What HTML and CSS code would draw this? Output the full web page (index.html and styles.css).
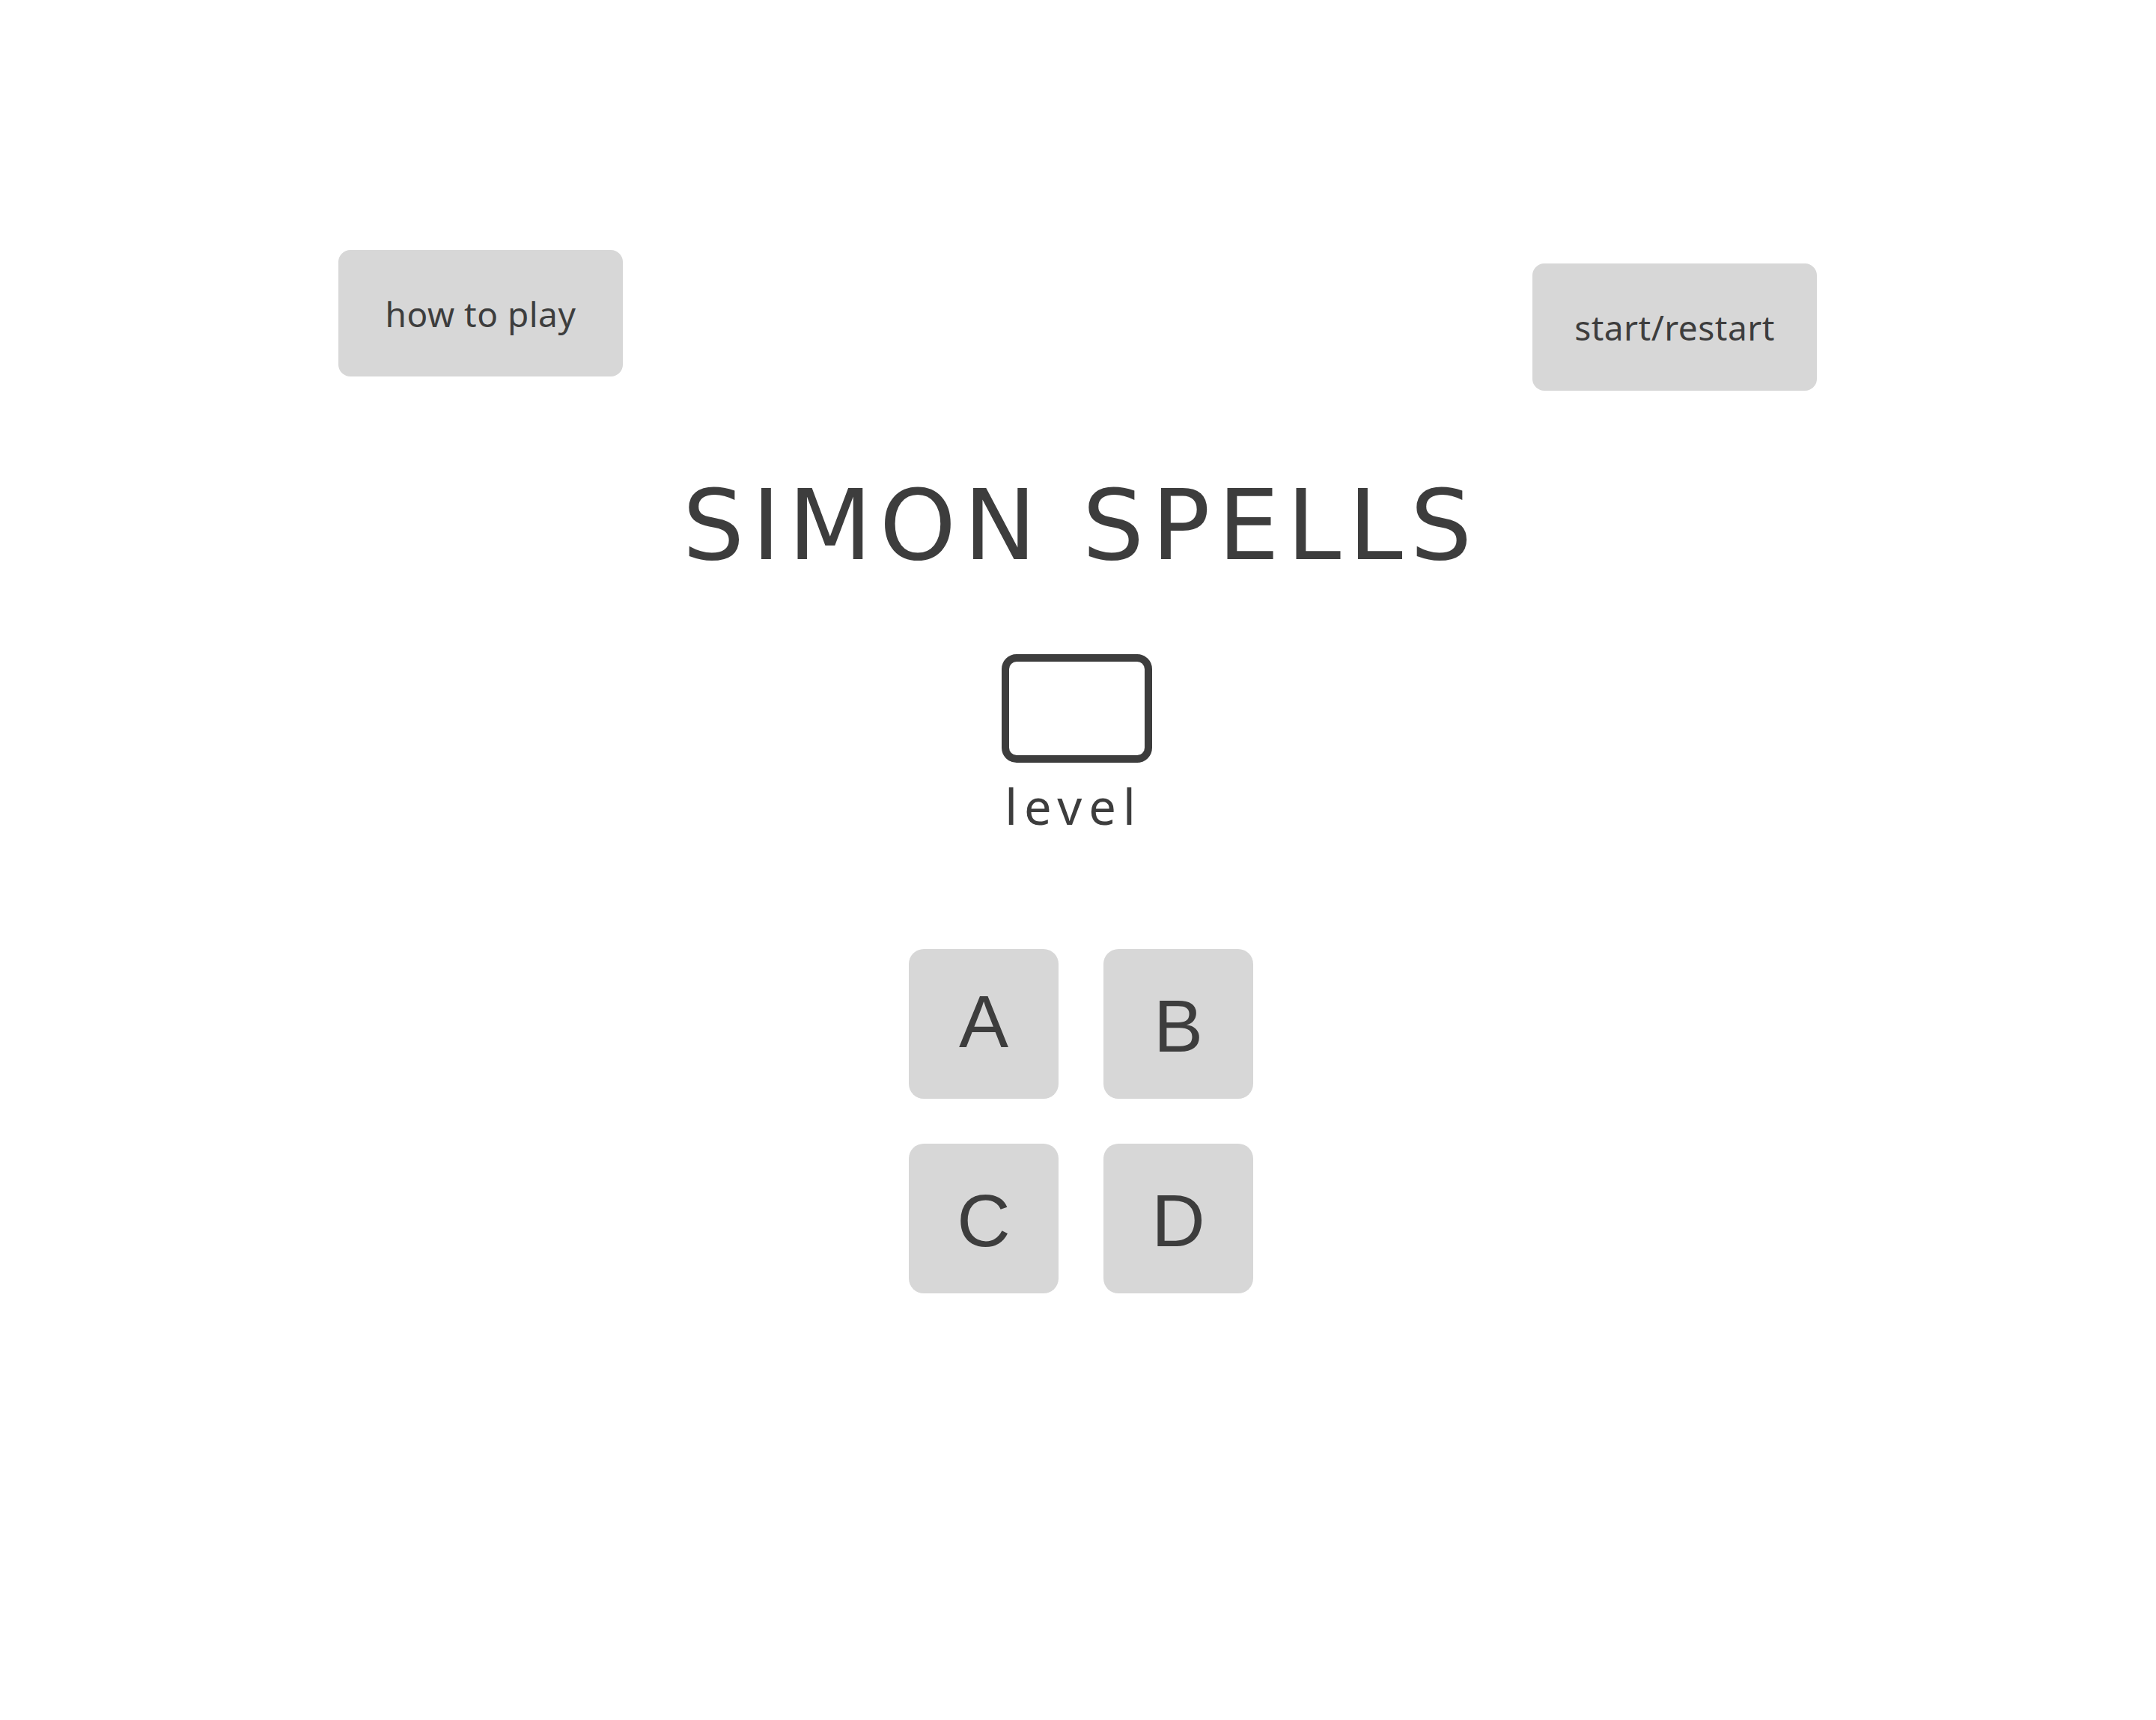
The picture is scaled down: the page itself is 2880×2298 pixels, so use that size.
FILE: index.html
```html
<!DOCTYPE html>
<html lang="en">
<head>
<meta charset="utf-8">
<title>Simon Spells</title>
<link rel="stylesheet" href="styles.css">
</head>
<body>
<div class="page">
  <header class="topbar">
    <button class="btn btn--help">how to play</button>
    <button class="btn btn--start">start/restart</button>
  </header>
  <h1 class="title">SIMON SPELLS</h1>
  <div class="level">
    <div class="level__box"></div>
    <div class="level__label">level</div>
  </div>
  <div class="board">
    <div class="tile tile--lifted">A</div>
    <div class="tile">B</div>
    <div class="tile">C</div>
    <div class="tile">D</div>
  </div>
</div>
</body>
</html>
```
FILE: styles.css
```css
html, body {
  margin: 0;
  padding: 0;
  background: #ffffff;
}

.page {
  color: #3d3d3d;
  font-family: "Noto Sans", sans-serif;
}

.topbar {
  display: flex;
  justify-content: space-between;
  align-items: flex-start;
  padding: 334px 453px 0 452px;
}

.btn {
  width: 380px;
  height: 169px;
  border: none;
  border-radius: 16px;
  background: #d7d7d7;
  color: #3d3d3d;
  font-family: "Noto Sans", sans-serif;
  font-size: 46px;
  line-height: 1;
  letter-spacing: 0.5px;
  display: flex;
  align-items: center;
  justify-content: center;
  padding: 0;
}

.btn--start {
  margin-top: 18px;
  height: 170px;
}

.title {
  margin: 114px 0 0 0;
  text-align: center;
  font-family: "DejaVu Sans", sans-serif;
  font-weight: normal;
  font-size: 130px;
  line-height: 132px;
  height: 132px;
  letter-spacing: 10px;
  padding-left: 8px;
}

.level {
  margin-top: 106px;
  display: flex;
  flex-direction: column;
  align-items: center;
}

.level__box {
  box-sizing: border-box;
  width: 201px;
  height: 145px;
  border: 10px solid #3d3d3d;
  border-radius: 20px;
  margin-left: -3px;
}

.level__label {
  margin-top: 26px;
  margin-right: 12px;
  font-family: "Noto Sans", sans-serif;
  font-size: 65px;
  line-height: 64px;
  letter-spacing: 9px;
}

.board {
  margin-top: 159px;
  display: grid;
  grid-template-columns: 200px 200px;
  grid-auto-rows: 200px;
  gap: 60px;
  justify-content: center;
  padding-left: 8px;
}

.tile {
  box-sizing: border-box;
  background: #d7d7d7;
  border-radius: 20px;
  display: flex;
  align-items: center;
  justify-content: center;
  font-family: "Liberation Sans", Arial, sans-serif;
  font-size: 99px;
  line-height: 1;
  padding-top: 5px;
}

.tile--lifted {
  padding-top: 0;
  padding-bottom: 7px;
}
```
